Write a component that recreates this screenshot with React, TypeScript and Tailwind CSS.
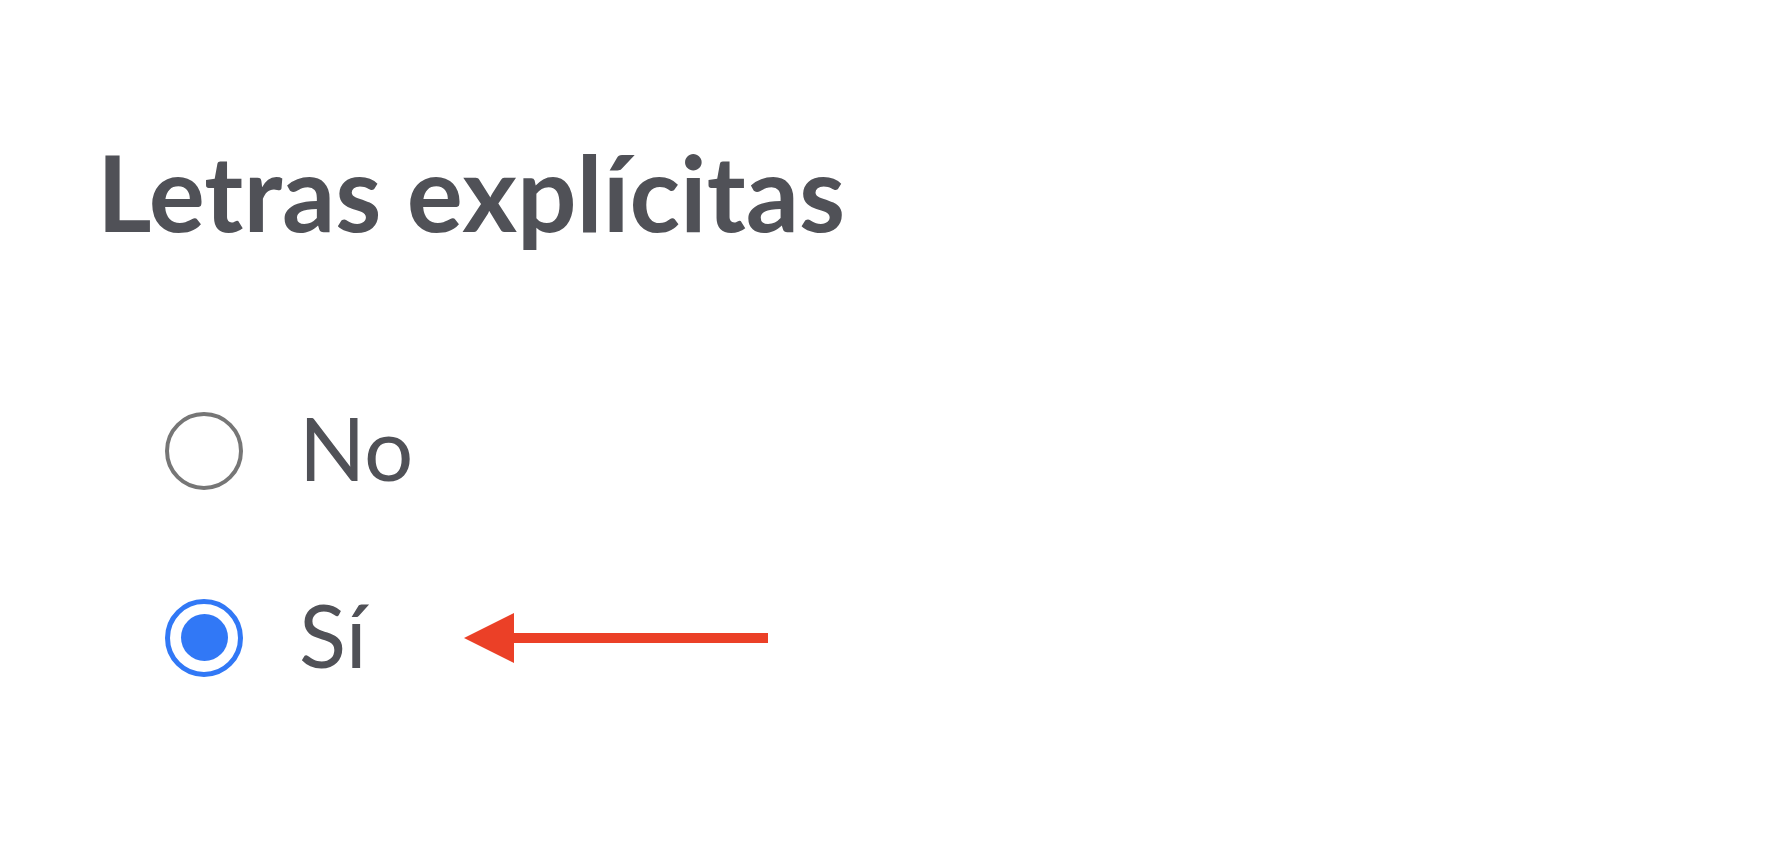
import React from "react";

function Radio({ checked }: { checked: boolean }) {
  if (checked) {
    return (
      <div className="flex h-[78px] w-[78px] shrink-0 items-center justify-center rounded-full border-[5px] border-[#3178f6] bg-white">
        <div className="h-[47px] w-[47px] rounded-full bg-[#3178f6]" />
      </div>
    );
  }
  return <div className="h-[78px] w-[78px] shrink-0 rounded-full border-4 border-[#767676] bg-white" />;
}

export default function App() {
  return (
    <div className="h-[864px] w-[1786px] bg-white text-[#505157]" style={{ fontFamily: "Lato, 'Noto Sans', sans-serif" }}>
      <div className="pl-[97px] pt-[139px]">
        <h1 className="text-[105px] font-bold leading-none tracking-normal">Letras explícitas</h1>
      </div>
      <div className="mt-[163px] flex flex-col gap-[100px] pl-[165px]">
        <label className="flex h-[87px] items-center gap-[56px]">
          <Radio checked={false} />
          <span className="pb-[7px] text-[87px] leading-none">No</span>
        </label>
        <label className="flex h-[87px] items-center gap-[56px]">
          <Radio checked={true} />
          <span className="pb-[7px] text-[87px] leading-none">Sí</span>
          <svg width="306" height="52" viewBox="0 0 306 52" className="ml-[41px]">
            <polygon points="0,26 50,1 50,51" fill="#eb4027" />
            <rect x="48" y="21" width="256" height="10" fill="#eb4027" />
          </svg>
        </label>
      </div>
    </div>
  );
}
